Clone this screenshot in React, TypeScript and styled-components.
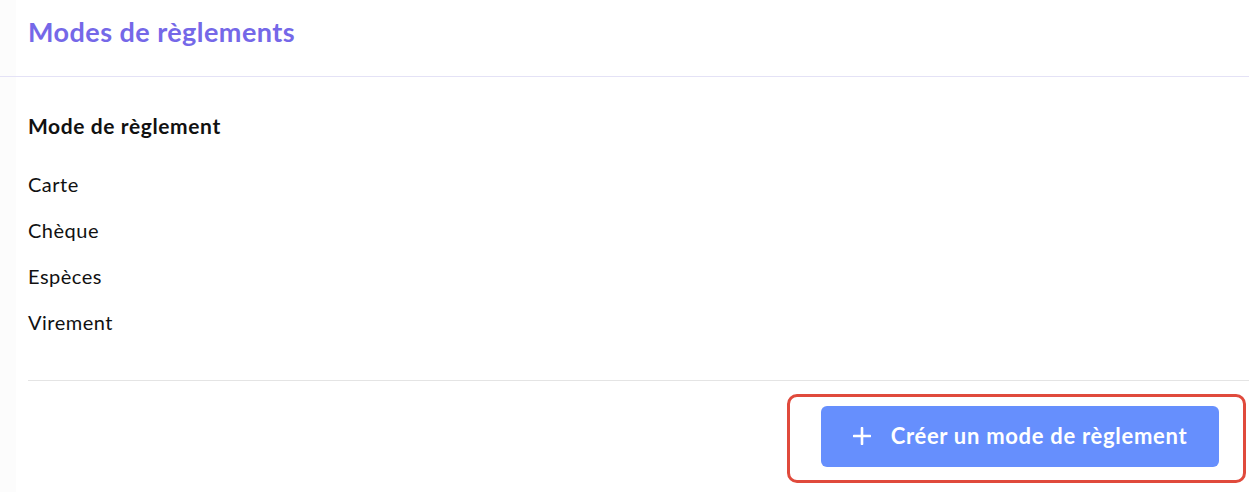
import React from "react";
import styled, { createGlobalStyle } from "styled-components";

const Global = createGlobalStyle`
  html, body { margin: 0; padding: 0; background: #ffffff; }
  body { font-family: Lato, "Noto Sans", sans-serif; }
`;

const Page = styled.div`
  width: 1249px;
  height: 492px;
  display: flex;
  flex-direction: column;
  background: linear-gradient(to right, #fcfcfc 16px, #ffffff 16px);
  overflow: hidden;
`;

const Header = styled.header`
  height: 76px;
  padding-left: 28px;
  display: flex;
  align-items: flex-start;
  border-bottom: 1.5px solid #e4e2f6;
`;

const Title = styled.h1`
  margin: 15px 0 0;
  line-height: 34px;
  font-size: 27px;
  font-weight: 700;
  color: #7568e8;
  letter-spacing: 0.45px;
`;

const Body = styled.section`
  padding-left: 28px;
  display: flex;
  flex-direction: column;
`;

const ColumnHead = styled.div`
  margin-top: 37px;
  height: 24px;
  line-height: 24px;
  font-size: 21px;
  font-weight: 700;
  letter-spacing: 0.6px;
  color: #111111;
`;

const List = styled.ul`
  list-style: none;
  margin: 34px 0 0;
  padding: 0;
  display: flex;
  flex-direction: column;
`;

const Item = styled.li`
  height: 46px;
  line-height: 24px;
  font-size: 20px;
  letter-spacing: 0.5px;
  color: #111111;
`;

const Divider = styled.hr`
  margin: 24px 0 0;
  border: none;
  border-top: 1.5px solid #e4e4e4;
`;

const Footer = styled.div`
  display: flex;
  justify-content: flex-end;
  padding: 13px 3px 0 0;
`;

const Highlight = styled.div`
  border: 3px solid #e04a3c;
  border-radius: 10px;
  padding: 9px 24px 13px 31px;
`;

const CreateButton = styled.button`
  width: 398px;
  height: 61px;
  border: none;
  border-radius: 6px;
  background: #668ffd;
  color: #ffffff;
  font-family: Lato, "Noto Sans", sans-serif;
  font-size: 22px;
  font-weight: 700;
  letter-spacing: 0.7px;
  display: flex;
  align-items: center;
  justify-content: center;
  gap: 20px;
  padding: 0 0 2px;
  cursor: pointer;
`;

const items = ["Carte", "Chèque", "Espèces", "Virement"];

export default function App() {
  return (
    <Page>
      <Global />
      <Header>
        <Title>Modes de règlements</Title>
      </Header>
      <Body>
        <ColumnHead>Mode de règlement</ColumnHead>
        <List>
          {items.map((i) => (
            <Item key={i}>{i}</Item>
          ))}
        </List>
        <Divider />
        <Footer>
          <Highlight>
            <CreateButton>
              <svg width="18" height="18" viewBox="0 0 18 18" fill="none">
                <path d="M9 1v16M1 9h16" stroke="#fff" strokeWidth="2.6" strokeLinecap="round" />
              </svg>
              Créer un mode de règlement
            </CreateButton>
          </Highlight>
        </Footer>
      </Body>
    </Page>
  );
}
